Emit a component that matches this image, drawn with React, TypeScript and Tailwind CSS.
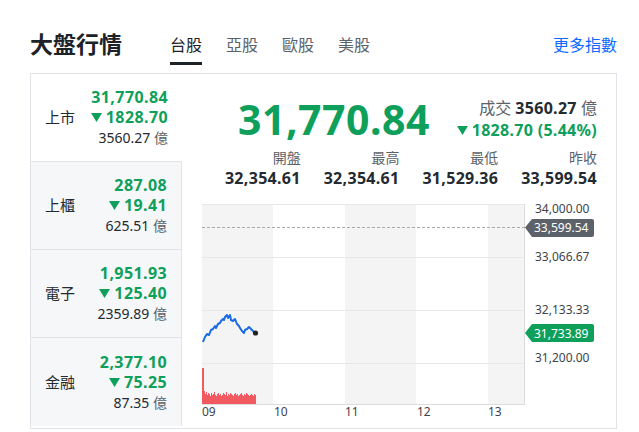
import React from 'react';

const GREEN = '#0ea05b';

type Row = { name: string; price: string; change: string; volume: string; active?: boolean };

const rows: Row[] = [
  { name: '上市', price: '31,770.84', change: '1828.70', volume: '3560.27', active: true },
  { name: '上櫃', price: '287.08', change: '19.41', volume: '625.51' },
  { name: '電子', price: '1,951.93', change: '125.40', volume: '2359.89' },
  { name: '金融', price: '2,377.10', change: '75.25', volume: '87.35' },
];

const stats = [
  { label: '開盤', value: '32,354.61' },
  { label: '最高', value: '32,354.61' },
  { label: '最低', value: '31,529.36' },
  { label: '昨收', value: '33,599.54' },
];

const Down = () => (
  <svg width="11" height="9" viewBox="0 0 11 9" className="inline-block mr-[4px]">
    <path d="M0 0 L11 0 L5.5 9 Z" fill={GREEN} />
  </svg>
);

const linePts: [number, number][] = [
  [1, 141], [3, 136], [5, 133], [7, 134], [9, 129], [11, 128], [13, 125], [14, 127], [16, 123],
  [18, 122], [19, 120], [21, 118], [22, 119], [23, 116], [25, 114], [26, 117], [28, 114],
  [29, 119], [31, 120], [33, 118], [35, 123], [37, 125], [38, 127], [40, 130], [42, 132],
  [43, 129], [45, 128], [47, 126], [49, 128], [51, 130], [53, 132],
];

const volBars = [
  36, 36, 13, 10, 12, 9, 11, 10, 8, 11, 9, 10, 12, 9, 8, 10, 11, 9, 10, 8, 9, 11, 10, 9, 12, 8,
  10, 9, 11, 10, 9, 8, 10, 11, 9, 10, 8, 9, 10, 11, 9, 8, 10, 9, 11, 10, 9, 8, 9, 10, 9, 8, 10, 9,
];

const Chart = () => (
  <svg width="395" height="222" viewBox="0 0 395 222" className="block">
    {/* alternating hour bands */}
    <rect x="0" y="3" width="71" height="200" fill="#f4f4f4" />
    <rect x="143" y="3" width="71" height="200" fill="#f4f4f4" />
    <rect x="286" y="3" width="36" height="200" fill="#f4f4f4" />
    {[3, 56, 109, 162].map((y) => (
      <line key={y} x1="0" x2="322" y1={y + 0.5} y2={y + 0.5} stroke="#e8e8e8" strokeWidth="1" />
    ))}
    <line x1="0" x2="322" y1="203.5" y2="203.5" stroke="#dcdcdc" />
    <line x1="322.5" x2="322.5" y1="3" y2="204" stroke="#dcdcdc" />
    <line x1="0" x2="324" y1="26.5" y2="26.5" stroke="#a9a9a9" strokeDasharray="3 2" />

    {/* volume */}
    {volBars.map((h, i) => (
      <rect key={i} x={i} y={203 - h} width="1" height={h} fill="#f25a62" />
    ))}

    {/* price line */}
    <polyline
      points={linePts.map((p) => p.join(',')).join(' ')}
      fill="none"
      stroke="#1a6ae5"
      strokeWidth="2"
      strokeLinejoin="round"
    />
    <circle cx="53.5" cy="132" r="2.6" fill="#222" />

    {/* y axis labels */}
    <g fontSize="12" fill="#3d444c" fontFamily="'Noto Sans', sans-serif">
      <text x="333" y="12">34,000.00</text>
      <text x="333" y="60">33,066.67</text>
      <text x="333" y="113">32,133.33</text>
      <text x="333" y="161">31,200.00</text>
    </g>

    {/* prev close tag */}
    <path d="M323 26.5 L330 18 H390 a2 2 0 0 1 2 2 V34 a2 2 0 0 1 -2 2 H330 Z" fill="#5c6269" />
    <text x="332" y="31" fontSize="12" fill="#fff" fontFamily="'Noto Sans', sans-serif">33,599.54</text>

    {/* current tag */}
    <path d="M323 132 L330 123 H390 a2 2 0 0 1 2 2 V139 a2 2 0 0 1 -2 2 H330 Z" fill="#0ea05b" />
    <text x="332" y="136.5" fontSize="12" fill="#fff" fontFamily="'Noto Sans', sans-serif">31,733.89</text>

    {/* x axis labels */}
    <g fontSize="12" fill="#3d444c" fontFamily="'Noto Sans', sans-serif">
      <text x="0" y="215">09</text>
      <text x="72" y="215">10</text>
      <text x="143" y="215">11</text>
      <text x="215" y="215">12</text>
      <text x="286" y="215">13</text>
    </g>
  </svg>
);

export default function App() {
  return (
    <div
      className="w-[639px] h-[432px] bg-white text-[#232a31] overflow-hidden"
      style={{ fontFamily: "'Noto Sans', 'Noto Sans CJK TC', sans-serif" }}
    >
      <div className="pl-[30px] pr-[22px] pt-[29px]">
        {/* header */}
        <div className="flex items-start h-[35px]">
          <h1 className="text-[23px] font-bold leading-[30px] text-[#1d2228]">大盤行情</h1>
          <div className="flex gap-[24px] ml-[48px] pt-[2px]">
            {['台股', '亞股', '歐股', '美股'].map((t, i) => (
              <div key={t} className="flex flex-col items-center">
                <span className={`text-[16px] leading-[28px] ${i === 0 ? 'text-[#1d2228]' : 'text-[#5b636a]'}`}>{t}</span>
                <span className={`mt-[3px] h-[3px] w-[32px] ${i === 0 ? 'bg-[#1d2228]' : 'bg-transparent'}`} />
              </div>
            ))}
          </div>
          <a className="ml-auto text-[16px] leading-[28px] pt-[2px] text-[#0f69ff]">更多指數</a>
        </div>

        {/* card */}
        <div className="mt-[9px] flex h-[356px] border border-[#e0e4e9]">
          <div className="w-[153px] flex flex-col">
            {rows.map((r) => (
              <div
                key={r.name}
                className={`h-[88px] flex items-center pl-[14px] pr-[14px] border-b border-[#e0e4e9] last:border-b-0 ${
                  r.active ? 'bg-white' : 'bg-[#f6f7f9] border-r'
                }`}
              >
                <span className="text-[15px] text-[#232a31]">{r.name}</span>
                <div className="ml-auto flex flex-col items-end">
                  <span className="text-[16px] font-bold leading-[19px] tracking-[0.4px]" style={{ color: GREEN }}>
                    {r.price}
                  </span>
                  <span className="text-[16px] font-bold leading-[21px] tracking-[0.4px] flex items-center" style={{ color: GREEN }}>
                    <Down />
                    {r.change}
                  </span>
                  <span className="text-[14px] leading-[19px] text-[#232a31]">
                    {r.volume} <span className="text-[#5b636a]">億</span>
                  </span>
                </div>
              </div>
            ))}
          </div>

          <div className="flex-1 flex flex-col pl-[20px] pr-[19px]">
            <div className="flex items-center h-[70px] pt-[20px]">
              <span className="ml-[36px] text-[41px] font-bold leading-none tracking-[0.5px]" style={{ color: GREEN }}>
                31,770.84
              </span>
              <div className="ml-auto flex flex-col items-end">
                <span className="text-[16px] leading-[22px] text-[#5b636a]">
                  成交 <b className="text-[#232a31] tracking-[0.3px]">3560.27</b> 億
                </span>
                <span className="text-[16px] font-bold leading-[22px] tracking-[0.3px] flex items-center" style={{ color: GREEN }}>
                  <Down />
                  1828.70 (5.44%)
                </span>
              </div>
            </div>

            <div className="grid grid-cols-4 mt-[4px]">
              {stats.map((s) => (
                <div key={s.label} className="flex flex-col items-end">
                  <span className="text-[14px] leading-[20px] text-[#5b636a]">{s.label}</span>
                  <span className="text-[16px] font-bold leading-[20px] tracking-[0.3px] text-[#232a31]">{s.value}</span>
                </div>
              ))}
            </div>

            <div className="mt-[13px]">
              <Chart />
            </div>
          </div>
        </div>
      </div>
    </div>
  );
}
